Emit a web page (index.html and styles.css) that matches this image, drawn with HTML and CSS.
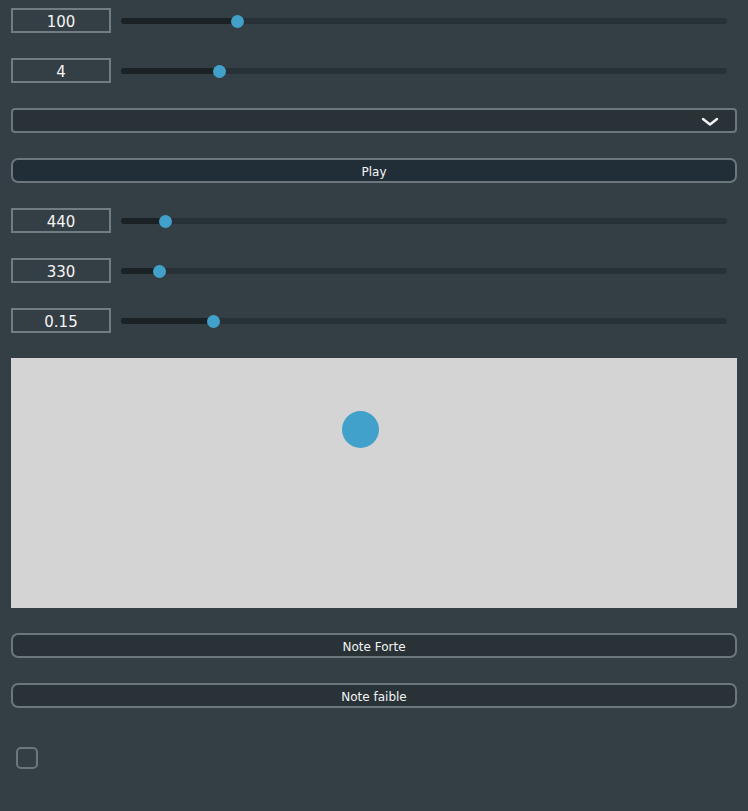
FILE: index.html
```html
<!DOCTYPE html>
<html>
<head>
<meta charset="utf-8">
<link rel="stylesheet" href="styles.css">
</head>
<body>
<div class="panel">
  <div class="row">
    <div class="num">100</div>
    <div class="slider"><div class="fill" style="width:19.3%"></div><div class="thumb" style="left:19.3%"></div></div>
  </div>
  <div class="row">
    <div class="num">4</div>
    <div class="slider"><div class="fill" style="width:16.2%"></div><div class="thumb" style="left:16.2%"></div></div>
  </div>
  <div class="select">
    <svg class="chev" width="18" height="10" viewBox="0 0 18 10"><path d="M2 2 L9 7.5 L16 2" fill="none" stroke="#f2f2f2" stroke-width="2.4" stroke-linecap="round" stroke-linejoin="round"/></svg>
  </div>
  <button class="btn play">Play</button>
  <div class="row">
    <div class="num">440</div>
    <div class="slider"><div class="fill" style="width:7.4%"></div><div class="thumb" style="left:7.4%"></div></div>
  </div>
  <div class="row">
    <div class="num">330</div>
    <div class="slider"><div class="fill" style="width:6.4%"></div><div class="thumb" style="left:6.4%"></div></div>
  </div>
  <div class="row">
    <div class="num">0.15</div>
    <div class="slider"><div class="fill" style="width:15.3%"></div><div class="thumb" style="left:15.3%"></div></div>
  </div>
  <div class="canvas"><div class="dot"></div></div>
  <button class="btn">Note Forte</button>
  <button class="btn">Note faible</button>
  <div class="check"></div>
</div>
</body>
</html>
```
FILE: styles.css
```css
html, body {
  margin: 0;
  padding: 0;
  background: #343e45;
  height: 100%;
}
body {
  font-family: "DejaVu Sans", sans-serif;
  color: #f4f4f4;
}
.panel {
  display: flex;
  flex-direction: column;
  gap: 25px;
  padding: 8px 11px 0 11px;
}
.row {
  display: flex;
  align-items: center;
  height: 25px;
  gap: 10px;
  padding-right: 10px;
}
.num {
  box-sizing: border-box;
  width: 100px;
  height: 25px;
  border: 2px solid #737c82;
  display: flex;
  align-items: center;
  justify-content: center;
  padding-top: 2px;
  font-size: 15px;
  color: #f4f4f4;
}
.slider {
  position: relative;
  flex: 1;
  height: 6px;
  margin-top: 1px;
  border-radius: 3px;
  background: #283137;
}
.fill {
  position: absolute;
  left: 0;
  top: 0;
  bottom: 0;
  border-radius: 3px;
  background: #1b2226;
}
.thumb {
  position: absolute;
  top: 50%;
  width: 13px;
  height: 13px;
  margin-left: -6.5px;
  margin-top: -6.5px;
  border-radius: 50%;
  background: #42a1ca;
}
.select {
  box-sizing: border-box;
  height: 25px;
  border: 2px solid #6c767c;
  border-radius: 4px;
  background: #283237;
  display: flex;
  align-items: center;
  justify-content: flex-end;
  padding: 2px 16px 0 0;
}
.chev { display: block; }
.btn {
  box-sizing: border-box;
  height: 25px;
  border: 2px solid #6c767c;
  border-radius: 7px;
  background: #283237;
  color: #f4f4f4;
  font-family: "DejaVu Sans", sans-serif;
  font-size: 12px;
  padding: 2px 0 0 0;
}
.btn.play { background: #222e37; }
.canvas {
  position: relative;
  height: 250px;
  background: #d4d4d4;
}
.dot {
  position: absolute;
  left: 343px;
  top: 53px;
  width: 37px;
  height: 37px;
  margin-left: -12px;
  border-radius: 50%;
  background: #42a1ca;
}
.check {
  box-sizing: border-box;
  width: 22px;
  height: 22px;
  margin: 14px 0 0 5px;
  border: 2px solid #6c767c;
  border-radius: 5px;
}
```
